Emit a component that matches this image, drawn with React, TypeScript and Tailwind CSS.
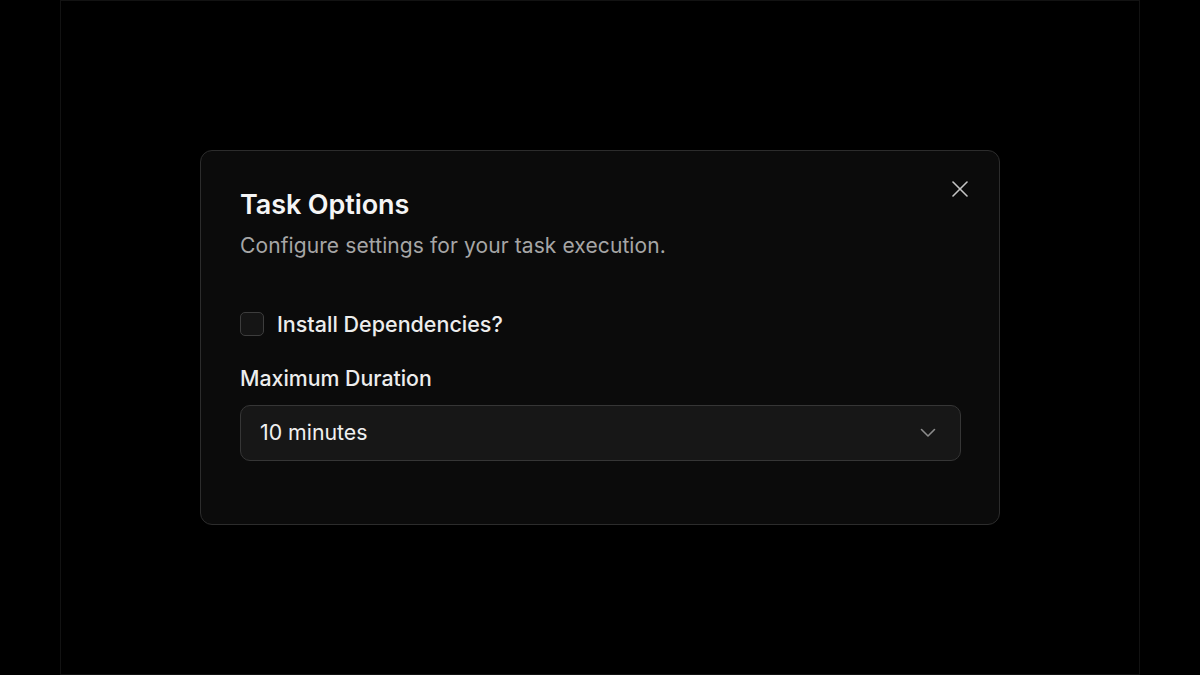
import { useState } from "react"

const FONT = { fontFamily: "Inter, 'Noto Sans', 'Liberation Sans', sans-serif" }

function CloseIcon() {
  return (
    <svg width="16" height="16" viewBox="0 0 16 16" fill="none" stroke="#c4c4c4" strokeWidth="1.6" strokeLinecap="round">
      <path d="M1 1 L15 15" />
      <path d="M15 1 L1 15" />
    </svg>
  )
}

function ChevronDown() {
  return (
    <svg width="16" height="10" viewBox="0 0 16 10" fill="none" stroke="#8c8c8c" strokeWidth="1.6" strokeLinecap="round" strokeLinejoin="round">
      <path d="M1.5 1.5 L8 8 L14.5 1.5" />
    </svg>
  )
}

export default function App() {
  const [install, setInstall] = useState(false)

  return (
    <div className="h-[675px] w-full bg-black" style={FONT}>
      <div className="mx-auto flex h-[675px] w-[1080px] items-center justify-center border border-[#121212]">
        <div className="relative h-[375px] w-[800px] rounded-[12px] border border-[#2c2c2c] bg-[#0b0b0b] px-[39px] pt-[36px]">
          <button className="absolute right-[31px] top-[30px] flex h-[16px] w-[16px] items-center justify-center">
            <CloseIcon />
          </button>

          <h2 className="text-[27px] leading-[36px] font-semibold tracking-[-0.1px] text-[#f5f5f5]">Task Options</h2>
          <p className="mt-[9px] text-[21px] leading-[28px] tracking-[0.1px] text-[#a6a6a6]">Configure settings for your task execution.</p>

          <label className="mt-[50px] flex items-center gap-[13px]">
            <button
              onClick={() => setInstall(!install)}
              className="h-[24px] w-[24px] rounded-[5px] border border-[#3d3d3d] bg-[#151515]"
            />
            <span className="text-[21.5px] leading-[28px] font-medium text-[#ededed]">Install Dependencies?</span>
          </label>

          <div className="mt-[26px] text-[21.3px] leading-[28px] font-medium text-[#ededed]">Maximum Duration</div>

          <div className="mt-[13px] flex h-[56px] w-[721px] items-center justify-between rounded-[10px] border border-[#363636] bg-[#171717] pl-[19px] pr-[24px]">
            <span className="text-[21.3px] text-[#f0f0f0]">10 minutes</span>
            <ChevronDown />
          </div>
        </div>
      </div>
    </div>
  )
}
